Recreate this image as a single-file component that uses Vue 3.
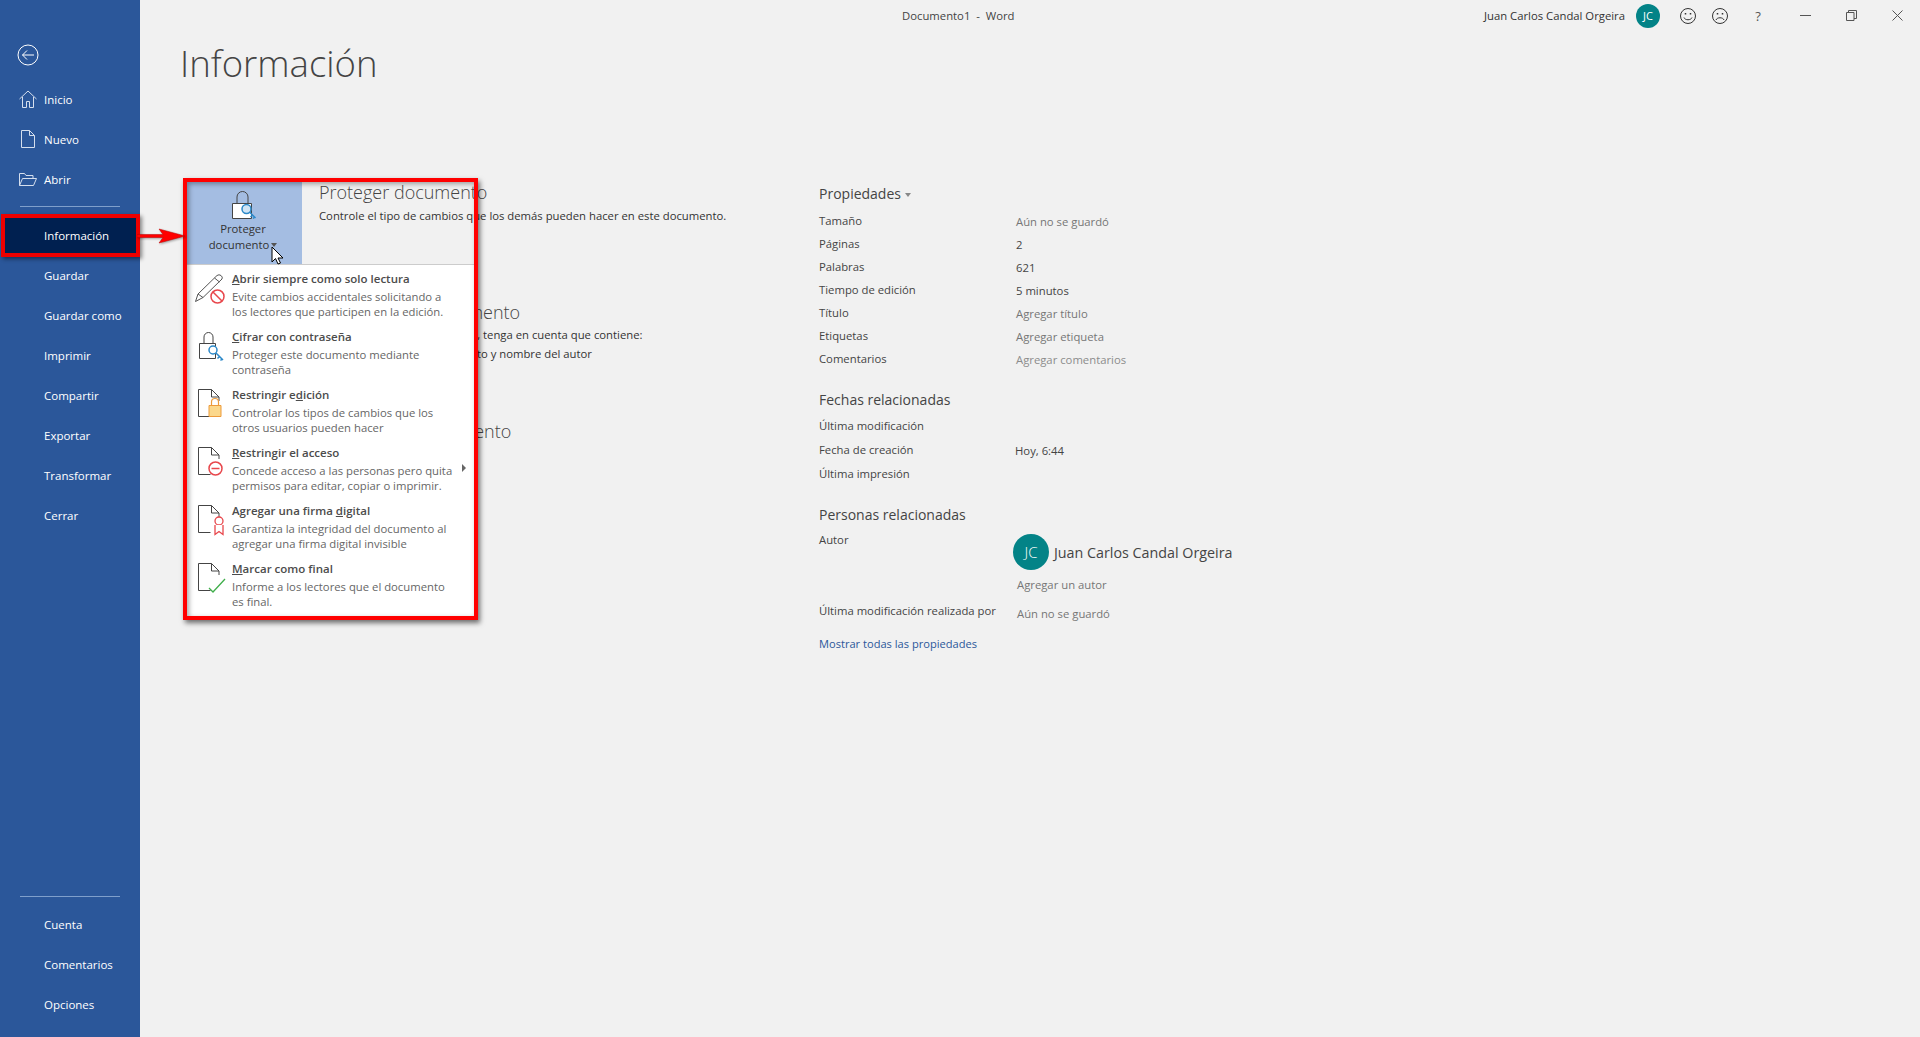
<script setup>
const navTop = [
  { label: 'Inicio', icon: 'home' },
  { label: 'Nuevo', icon: 'doc' },
  { label: 'Abrir', icon: 'open' },
];
const navMid = ['Información', 'Guardar', 'Guardar como', 'Imprimir', 'Compartir', 'Exportar', 'Transformar', 'Cerrar'];
const navBottom = ['Cuenta', 'Comentarios', 'Opciones'];

const menu = [
  { icon: 'readonly', pre: '', key: 'A', post: 'brir siempre como solo lectura', lines: ['Evite cambios accidentales solicitando a', 'los lectores que participen en la edición.'] },
  { icon: 'lock', pre: '', key: 'C', post: 'ifrar con contraseña', lines: ['Proteger este documento mediante', 'contraseña'] },
  { icon: 'restrict', pre: 'Restringir e', key: 'd', post: 'ición', lines: ['Controlar los tipos de cambios que los', 'otros usuarios pueden hacer'] },
  { icon: 'access', pre: '', key: 'R', post: 'estringir el acceso', lines: ['Concede acceso a las personas pero quita', 'permisos para editar, copiar o imprimir.'], arrow: true },
  { icon: 'sign', pre: 'Agregar una firma ', key: 'd', post: 'igital', lines: ['Garantiza la integridad del documento al', 'agregar una firma digital invisible'] },
  { icon: 'final', pre: '', key: 'M', post: 'arcar como final', lines: ['Informe a los lectores que el documento', 'es final.'] },
];

const props1 = [
  ['Tamaño', 'Aún no se guardó', 'add'],
  ['Páginas', '2', ''],
  ['Palabras', '621', ''],
  ['Tiempo de edición', '5 minutos', ''],
  ['Título', 'Agregar título', 'add'],
  ['Etiquetas', 'Agregar etiqueta', 'add'],
  ['Comentarios', 'Agregar comentarios', 'faint'],
];
const dates = [
  ['Última modificación', ''],
  ['Fecha de creación', 'Hoy, 6:44'],
  ['Última impresión', ''],
];
</script>

<template>
  <div class="app">
    <aside class="side">
      <svg class="back" width="22" height="22" viewBox="0 0 22 22" fill="none" stroke="#fff" stroke-width="1">
        <circle cx="11" cy="11" r="10" />
        <path d="M5.500 11H17M10 6.500 5.500 11l4.500 4.500" />
      </svg>
      <ul class="nav top">
        <li v-for="n in navTop" :key="n.label" class="nav-item">
          <svg width="20" height="20" viewBox="0 0 20 20" fill="none" stroke="#d5dfee" stroke-width="1">
            <path v-if="n.icon === 'home'" d="M1.500 10 10 2l8.500 8M4.500 8v10.500h4v-6h3v6h4V8" />
            <path v-if="n.icon === 'doc'" d="M3.500 1.500h8l5 5v12h-13zM11.500 1.500v5h5" />
            <path v-if="n.icon === 'open'" d="M1.500 16.500v-12h5l1.500 2h7v3M1.500 16.500l3-7h14l-3 7z" />
          </svg>
          <span>{{ n.label }}</span>
        </li>
      </ul>
      <div class="rule"></div>
      <ul class="nav mid">
        <li v-for="(n, i) in navMid" :key="n" class="nav-item" :class="{ current: i === 0 }">
          <span class="no-icon">{{ n }}</span>
        </li>
      </ul>
      <div class="rule bottom-rule"></div>
      <ul class="nav">
        <li v-for="n in navBottom" :key="n" class="nav-item">
          <span class="no-icon">{{ n }}</span>
        </li>
      </ul>
    </aside>

    <main class="main">
      <header class="titlebar">
        <span class="doc-title">Documento1 &nbsp;-&nbsp; Word</span>
        <div class="win">
          <span class="user">Juan Carlos Candal Orgeira</span>
          <span class="avatar small">JC</span>
          <svg class="face first" width="18" height="18" viewBox="0 0 18 18" fill="none" stroke="#333" stroke-width="1">
            <circle cx="9" cy="9" r="7.500" />
            <path d="M5 10.500c1 3 7 3 8 0" />
            <path d="M6.500 6v1.500M11.500 6v1.500" stroke-width="1.500" />
          </svg>
          <svg class="face" width="18" height="18" viewBox="0 0 18 18" fill="none" stroke="#333" stroke-width="1">
            <circle cx="9" cy="9" r="7.500" />
            <path d="M5 13c1-3 7-3 8 0" />
            <path d="M6.500 6v1.500M11.500 6v1.500" stroke-width="1.500" />
          </svg>
          <span class="help">?</span>
          <svg class="ctl min" width="11" height="11" viewBox="0 0 11 11" stroke="#555" fill="none"><path d="M0 5.500h11" /></svg>
          <svg class="ctl max" width="11" height="11" viewBox="0 0 11 11" stroke="#555" fill="none"><path d="M.5 2.500h7.500v8H.5zM2.500 2.500v-2h8v8H8" /></svg>
          <svg class="ctl close" width="11" height="11" viewBox="0 0 11 11" stroke="#555" fill="none"><path d="m.5.500 10 10M10.500.500l-10 10" /></svg>
        </div>
      </header>

      <h1 class="page-title">Información</h1>

      <div class="columns">
        <div class="left">
          <section class="block">
            <div class="action current-action">
              <svg width="32" height="32" viewBox="0 0 32 32" fill="none">
                <path d="M10 13V7a5.500 5.500 0 0 1 11 0v6" stroke="#444" />
                <path d="M5.500 13.500h19v15h-19z" fill="#fff" stroke="#444" />
                <circle cx="19.500" cy="19" r="4.500" fill="#cfe4f5" stroke="#2b88c8" stroke-width="1.500" />
                <path d="m22.500 22 6 6M25.500 25l-2 2M27.500 27l-1.500 1.500" stroke="#2b88c8" stroke-width="1.500" />
              </svg>
              <span class="action-label">Proteger<br />documento<i class="caret"></i></span>
            </div>
            <div class="block-text">
              <h2>Proteger documento</h2>
              <p>Controle el tipo de cambios que los demás pueden hacer en este documento.</p>
            </div>
          </section>
          <section class="block">
            <div class="action"></div>
            <div class="block-text">
              <h2>Inspeccionar documento</h2>
              <p>Antes de publicar este archivo, tenga en cuenta que contiene:</p>
              <p class="bullet">Propiedades del documento y nombre del autor</p>
            </div>
          </section>
          <section class="block">
            <div class="action"></div>
            <div class="block-text">
              <h2>Administrar documento</h2>
              <p>No hay cambios sin guardar.</p>
            </div>
          </section>

          <div class="menu">
            <div v-for="m in menu" :key="m.post" class="menu-item">
              <svg class="menu-icon" width="32" height="32" viewBox="0 0 32 32" fill="none">
                <g v-if="m.icon === 'readonly'">
                  <path d="M1.500 29.500 4 22 23 3.500q2-1.500 4 0t1 3.500L9 25.500zM4 22l5 3.500M20.500 6l5 4" stroke="#555" />
                  <circle cx="23.500" cy="24.500" r="6.500" stroke="#e8474c" stroke-width="1.500" />
                  <path d="m19 20 9 9" stroke="#e8474c" stroke-width="1.500" />
                </g>
                <g v-if="m.icon === 'lock'">
                  <path d="M10 13V7a4.500 4.500 0 0 1 9 0v6" stroke="#444" />
                  <path d="M5.500 13.500h16v15h-16z" fill="#fff" stroke="#444" />
                  <circle cx="19" cy="20" r="4" fill="#fff" stroke="#2b88c8" stroke-width="1.500" />
                  <path d="m22 23 7 7M25.500 26.500l-2 2M28 29l-1.500 1.500" stroke="#2b88c8" stroke-width="1.500" />
                </g>
                <g v-if="m.icon !== 'readonly' && m.icon !== 'lock'">
                  <path d="M17.500 1.500h-13v27h12M17.500 1.500l7.500 7.500v4M17.500 1.500V9H25" stroke="#444" />
                </g>
                <g v-if="m.icon === 'restrict'">
                  <path d="M17.500 17v-3a3.500 3.500 0 0 1 7 0v3" stroke="#ed9b3b" stroke-width="1.200" />
                  <path d="M15 17.500h12v11H15z" fill="#fbd88c" stroke="#ed9b3b" />
                </g>
                <g v-if="m.icon === 'access'">
                  <circle cx="21.500" cy="22.500" r="6.500" fill="#fff" stroke="#e8474c" stroke-width="1.500" />
                  <path d="M17.500 22.500h8" stroke="#e8474c" stroke-width="1.500" />
                </g>
                <g v-if="m.icon === 'sign'">
                  <circle cx="25" cy="17" r="4" fill="#fff" stroke="#e8474c" stroke-width="1.300" />
                  <path d="M21 21v9.500l4-3 4 3V21" fill="#fff" stroke="#e8474c" stroke-width="1.300" />
                </g>
                <g v-if="m.icon === 'final'">
                  <path d="m15 26 4 4L31 17" stroke="#3fae4a" stroke-width="1.300" />
                </g>
              </svg>
              <div class="menu-text">
                <div class="menu-title">{{ m.pre }}<u>{{ m.key }}</u>{{ m.post }}</div>
                <div v-for="l in m.lines" :key="l" class="menu-line">{{ l }}</div>
              </div>
              <i v-if="m.arrow" class="sub-arrow"></i>
            </div>
          </div>
          <div class="frame"></div>
          <svg class="cursor" width="14" height="20" viewBox="0 0 14 20">
            <path d="M1 1v15l3.500-3.500L7 18l2.500-1-2.500-5h5z" fill="#fff" stroke="#000" />
          </svg>
        </div>

        <div class="right">
          <h3 class="first-head">Propiedades<i class="caret light"></i></h3>
          <div v-for="r in props1" :key="r[0]" class="row">
            <span>{{ r[0] }}</span>
            <span class="val" :class="r[2]">{{ r[1] }}</span>
          </div>
          <h3 class="head">Fechas relacionadas</h3>
          <div v-for="r in dates" :key="r[0]" class="row date-row">
            <span>{{ r[0] }}</span>
            <span class="val date">{{ r[1] }}</span>
          </div>
          <h3 class="head people">Personas relacionadas</h3>
          <div class="row author-row">
            <span>Autor</span>
            <div class="author">
              <span class="avatar big">JC</span>
              <span class="author-name">Juan Carlos Candal Orgeira</span>
            </div>
          </div>
          <div class="row add-author">
            <span></span>
            <span class="val add">Agregar un autor</span>
          </div>
          <div class="row last-mod">
            <span>Última modificación realizada por</span>
            <span class="val add">Aún no se guardó</span>
          </div>
          <a class="all">Mostrar todas las propiedades</a>
        </div>
      </div>
    </main>

    <svg class="red-arrow" width="50" height="18" viewBox="0 0 50 18">
      <path d="M0 7.500h26L22 2l26 7-26 7 4-5.500H0z" fill="#f00" stroke="#b00" stroke-width=".5" />
    </svg>
  </div>
</template>

<style>
html, body {
  margin: 0;
  background: #f1f1f1;
}
</style>

<style scoped>
.app {
  position: relative;
  display: flex;
  height: 1037px;
  overflow: hidden;
  background: #f1f1f1;
  color: #444;
  font-family: "Open Sans", "Noto Sans", sans-serif;
  font-size: 11.3px;
}

.side {
  width: 140px;
  flex: none;
  background: #2b579a;
  color: #fff;
  display: flex;
  flex-direction: column;
  padding-bottom: 13px;
  box-sizing: border-box;
  font-size: 11.5px;
}

.back {
  margin: 44px 0 0 17px;
  flex: none;
}

.nav {
  list-style: none;
  margin: 0;
  padding: 0;
}

.nav.top {
  margin-top: 13px;
}

.nav-item {
  height: 40px;
  display: flex;
  align-items: center;
  padding-left: 18px;
  gap: 6px;
  box-sizing: border-box;
}

.no-icon {
  padding-left: 26px;
}

.rule {
  height: 1px;
  background: #7f9fcb;
  margin: 7px 20px 8px;
}

.bottom-rule {
  margin: auto 20px 7px;
}

.nav-item.current {
  background: #002050;
  margin: -1px 0 -2px 1px;
  height: 43px;
  border: 4px solid #e00;
  box-shadow: 2px 2px 4px rgba(0, 0, 0, 0.45);
  padding-left: 13px;
}

.main {
  flex: 1;
  min-width: 0;
  display: flex;
  flex-direction: column;
}

.titlebar {
  height: 31px;
  display: flex;
  align-items: center;
  flex: none;
}

.doc-title {
  margin-left: 762px;
}

.win {
  margin-left: auto;
  display: flex;
  align-items: center;
}

.user {
  color: #333;
}

.avatar {
  display: flex;
  align-items: center;
  justify-content: center;
  border-radius: 50%;
  background: #038387;
  color: #fff;
}

.avatar.small {
  width: 24px;
  height: 24px;
  margin-left: 11px;
  font-size: 11px;
}

.face {
  margin-left: 14px;
}

.face.first {
  margin-left: 19px;
}

.help {
  margin-left: 24px;
  width: 10px;
  font-size: 13px;
  text-align: center;
  color: #555;
}

.ctl.min {
  margin-left: 37px;
}

.ctl.max {
  margin-left: 35px;
}

.ctl.close {
  margin: 0 17px 0 35px;
}

.page-title {
  margin: 8px 0 0 40px;
  font-size: 36.500px;
  line-height: 48px;
  font-weight: 300;
  color: #444;
}

.columns {
  display: flex;
  margin: 95px 0 0 47px;
}

.left {
  position: relative;
  width: 632px;
  flex: none;
}

.block {
  display: flex;
  gap: 17px;
  height: 119.500px;
  color: #333;
}

.block-text {
  margin-top: -1px;
}

.action {
  width: 115px;
  height: 82px;
  flex: none;
  display: flex;
  flex-direction: column;
  align-items: center;
  padding: 8px 3px 0 0;
  box-sizing: border-box;
}

.current-action {
  background: #a4bde2;
}

.action-label {
  text-align: center;
  line-height: 16px;
  margin-top: -1px;
}

.caret {
  display: inline-block;
  border: 3px solid transparent;
  border-top: 4px solid #555;
  border-bottom: 0;
  margin-left: 2px;
  vertical-align: 2px;
}

.caret.light {
  border-top-color: #888;
  margin-left: 4px;
}

h2 {
  margin: 0;
  font-size: 18px;
  line-height: 22px;
  font-weight: 300;
  color: #444;
  white-space: nowrap;
}

.block p {
  margin: 2.500px 0 0;
  line-height: 19px;
  white-space: nowrap;
}

.block p.bullet {
  margin-top: 0;
  padding-left: 20px;
}

.menu {
  position: absolute;
  left: 0;
  top: 82px;
  width: 288px;
  height: 354px;
  padding-top: 6px;
  box-sizing: border-box;
  background: #fff;
  border-top: 1px solid #ccc;
}

.menu-item {
  position: relative;
  display: flex;
  gap: 6px;
  height: 58px;
  padding-left: 7px;
}

.menu-icon {
  flex: none;
  margin-top: 1px;
}

.menu-title {
  font-size: 11.500px;
  font-weight: 600;
  line-height: 16px;
  margin-bottom: 2px;
  color: #4c4c4c;
}

.menu-line {
  line-height: 15px;
  color: #666;
  white-space: nowrap;
}

.sub-arrow {
  position: absolute;
  left: 275px;
  top: 19px;
  border: 4px solid transparent;
  border-left: 4px solid #666;
  border-right: 0;
}

.frame {
  position: absolute;
  left: -4px;
  top: -4px;
  width: 287px;
  height: 434px;
  border: 4px solid #f00;
  box-shadow: 2px 3px 5px rgba(0, 0, 0, 0.55), inset 2px 2px 5px rgba(0, 0, 0, 0.35);
}

.cursor {
  position: absolute;
  left: 84px;
  top: 64px;
}

.right {
  flex: 1;
  color: #444;
}

.first-head, .head {
  margin: 0;
  font-size: 14px;
  line-height: 24px;
  font-weight: 400;
  color: #444;
}

.first-head {
  margin-bottom: 2.500px;
}

.head {
  margin: 18.500px 0 1.500px;
}

.head.people {
  margin: 17.500px 0 0.500px;
}

.row {
  display: grid;
  grid-template-columns: 197px 1fr;
  line-height: 23px;
  height: 23px;
}

.date-row {
  height: 24px;
}

.val {
  position: relative;
  top: 1px;
  color: #444;
}

.val.date {
  left: -1px;
}

.val.add {
  color: #767676;
}

.val.faint {
  color: #8c8c8c;
}

.author-row {
  height: 44px;
}

.author {
  display: flex;
  align-items: center;
  gap: 5px;
  margin: 5px 0 0 -3px;
}

.avatar.big {
  width: 36px;
  height: 36px;
  font-size: 15px;
  font-weight: 300;
  flex: none;
}

.author-name {
  font-size: 14.300px;
  white-space: nowrap;
}

.add-author {
  height: 27px;
}

.add-author .val, .last-mod .val {
  left: 1px;
}

.last-mod .val {
  top: 3px;
}

.all {
  display: block;
  margin-top: 10px;
  line-height: 23px;
  font-size: 11.100px;
  color: #2b579a;
}

.red-arrow {
  position: absolute;
  left: 137px;
  top: 227px;
  filter: drop-shadow(1px 1px 1px rgba(0, 0, 0, 0.35));
}
</style>
